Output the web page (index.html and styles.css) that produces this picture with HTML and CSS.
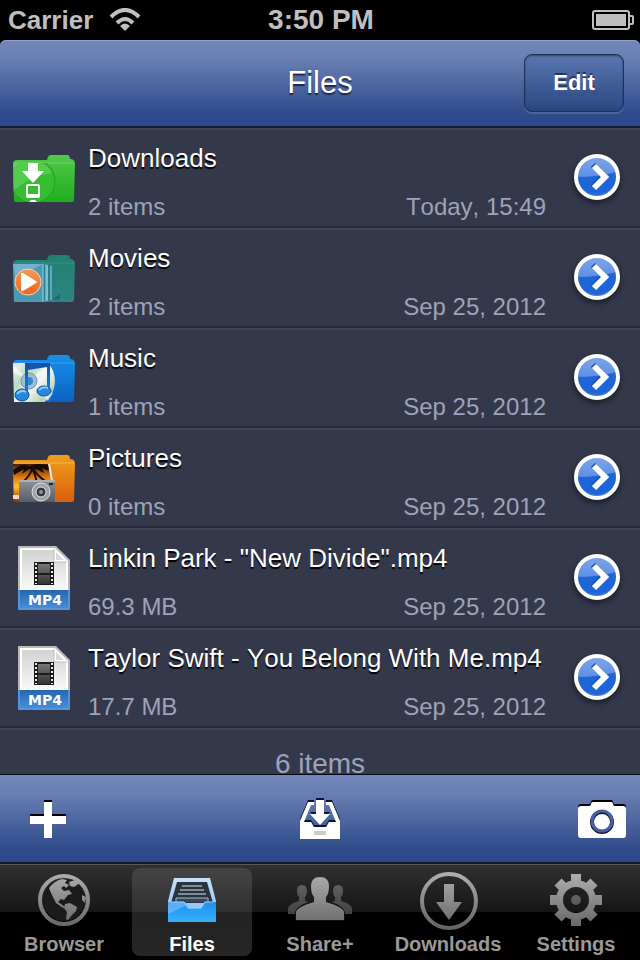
FILE: index.html
```
<!DOCTYPE html>
<html lang="en">

<head>
    <meta charset="UTF-8">
    <meta name="viewport" content="width=device-width, initial-scale=1.0">
    <title>Files</title>
    <link rel="stylesheet" href="styles.css">
</head>

<body>
    <!-- Shared shapes and gradients -->
    <svg class="defs" width="0" height="0" aria-hidden="true">
        <defs>
            <linearGradient id="green" x2="0" y2="1"><stop offset="0" stop-color="#52c94c"/><stop offset="1" stop-color="#1fae1c"/></linearGradient>
            <linearGradient id="teal" x2="0" y2="1"><stop offset="0" stop-color="#23806f"/><stop offset="1" stop-color="#2b8583"/></linearGradient>
            <linearGradient id="blue" x2="0" y2="1"><stop offset="0" stop-color="#1790ea"/><stop offset="1" stop-color="#0b62c4"/></linearGradient>
            <linearGradient id="orange" x2="0" y2="1"><stop offset="0" stop-color="#ef9f1c"/><stop offset="1" stop-color="#d95f0c"/></linearGradient>
            <linearGradient id="sunset" x2="0" y2="1"><stop offset="0" stop-color="#4a1a04"/><stop offset=".35" stop-color="#e0790c"/><stop offset=".6" stop-color="#ffc629"/><stop offset="1" stop-color="#8c2c04"/></linearGradient>
            <linearGradient id="disc" x2="1" y2="1"><stop offset="0" stop-color="#c3a7d8"/><stop offset=".25" stop-color="#e6e9ea"/><stop offset=".42" stop-color="#b9dcc0"/><stop offset=".6" stop-color="#f4f6f8"/><stop offset=".8" stop-color="#b8d8b0"/><stop offset="1" stop-color="#d6c6e8"/></linearGradient>
            <linearGradient id="note" x2="0" y2="1"><stop offset="0" stop-color="#0d4ea8"/><stop offset="1" stop-color="#1f83dc"/></linearGradient>
            <linearGradient id="play" x2="0" y2="1"><stop offset="0" stop-color="#f09a55"/><stop offset="1" stop-color="#f0651a"/></linearGradient>
            <linearGradient id="steel" x2="0" y2="1"><stop offset="0" stop-color="#8b9299"/><stop offset="1" stop-color="#565d66"/></linearGradient>
            <linearGradient id="paper" x2="0" y2="1"><stop offset="0" stop-color="#d2d2d2"/><stop offset="1" stop-color="#fafafa"/></linearGradient>
            <linearGradient id="band" x2="0" y2="1"><stop offset="0" stop-color="#2567ae"/><stop offset="1" stop-color="#4b92dc"/></linearGradient>
            <linearGradient id="film" x2="0" y2="1"><stop offset="0" stop-color="#777"/><stop offset="1" stop-color="#333"/></linearGradient>
            <linearGradient id="ball" x2="0" y2="1"><stop offset="0" stop-color="#7fa6ea"/><stop offset="1" stop-color="#3f78dc"/></linearGradient>
            <linearGradient id="tray" x2="0" y2="1"><stop offset="0" stop-color="#1c8df0"/><stop offset="1" stop-color="#37b4fb"/></linearGradient>
            <linearGradient id="trayEdge" x2="0" y2="1"><stop offset="0" stop-color="#c9e2fa"/><stop offset="1" stop-color="#7fb4ee"/></linearGradient>
            <linearGradient id="grey" gradientUnits="userSpaceOnUse" x1="0" y1="4" x2="0" y2="60"><stop offset="0" stop-color="#b0b0b0"/><stop offset="1" stop-color="#656565"/></linearGradient>
            <linearGradient id="greyDim" gradientUnits="userSpaceOnUse" x1="0" y1="14" x2="0" y2="46"><stop offset="0" stop-color="#626262"/><stop offset="1" stop-color="#424242"/></linearGradient>
            <clipPath id="folderClip"><path d="M1 9h62l-1 39H2z"/></clipPath>

            <path id="folder" d="M1 10q0-4 4-4h30q1-5 4-5h16q3 0 3 4 5 0 5 5l-1 36q0 2-2 2H4q-2 0-2-2z"/>

            <symbol id="arrow" viewBox="0 0 60 60">
                <circle cx="30" cy="29" r="21" fill="url(#ball)"/>
                <path d="M10 29q20 0 40-5a20 20 0 1 1-40 5z" fill="#1e66d8"/>
                <circle cx="30" cy="29" r="21" fill="none" stroke="#fff" stroke-width="4"/>
                <path d="M26 17l11 11-11 11" fill="none" stroke="#164ca8" stroke-width="6"/>
                <path d="M27 18l11 11-11 11" fill="none" stroke="#fff" stroke-width="6"/>
            </symbol>

            <symbol id="mp4" viewBox="0 0 52 64">
                <path d="M0 0h38l14 14v50H0z" fill="#b9b9b9"/>
                <path d="M2 2h35l13 13v33H2z" fill="#fff"/>
                <path d="M4 4h32v12h12v29H4z" fill="url(#paper)"/>
                <path d="M36 2v14h14z" fill="#fff"/>
                <path d="M38 6v8h8z" fill="#d9d9d9"/>
                <path d="M36 3v13h13" fill="none" stroke="#bdbdbd"/>
                <path d="M16 16h20v23H16z" fill="#1b1b1b"/>
                <path d="M20 18h12v9H20zM20 29h12v9H20z" fill="url(#film)"/>
                <path d="M18 17v21M34 17v21" stroke="#e8e8e8" stroke-width="2" stroke-dasharray="2 2"/>
                <path d="M0 44h52v20H0z" fill="url(#band)"/>
                <path d="M1 44v19h50V44" fill="none" stroke="#5295dc" stroke-width="2"/>
                <text x="27" y="59" class="file-type">MP4</text>
            </symbol>
        </defs>
    </svg>

    <div class="status-bar">
        <div class="carrier">
            Carrier
            <svg width="32" height="24" viewBox="0 0 32 24" aria-label="Wi-Fi">
                <g fill="none" stroke="#bfbfbf" stroke-width="4">
                    <path d="M2 9q14-14 28 0"/>
                    <path d="M8 15q8-8 16 0"/>
                </g>
                <path d="M11 18q5-5 10 0l-5 5z" fill="#bfbfbf"/>
            </svg>
        </div>
        <div class="clock">3:50 PM</div>
        <svg class="battery" width="42" height="20" viewBox="0 0 42 20" aria-label="Battery full">
            <rect x="1" y="1" width="36" height="18" rx="2" fill="none" stroke="#bfbfbf" stroke-width="2"/>
            <rect x="4" y="4" width="30" height="12" fill="#bfbfbf"/>
            <path d="M38 6h2q1 0 1 1v6q0 1-1 1h-2" fill="none" stroke="#bfbfbf" stroke-width="2"/>
        </svg>
    </div>

    <header class="nav-bar">
        <h1>Files</h1>
        <button class="edit-button" type="button">Edit</button>
    </header>

    <main class="file-list">
        <ul>
            <li class="row">
                <svg class="icon" width="64" height="48" viewBox="0 0 64 48">
                    <use href="#folder" fill="url(#green)"/>
                    <path d="M2 9h60" stroke="#8fdc85" stroke-opacity=".6"/>
                    <g clip-path="url(#folderClip)">
                        <circle cx="21" cy="27" r="22" fill="#36bd32" stroke="#239d23"/>
                        <path d="M1 9h28q8 3 11 10Q20 21 1 37z" fill="#6ad364" fill-opacity=".6"/>
                        <path d="M16 9h10v8h6L21 29 10 17h6z" fill="#fff"/>
                        <rect x="15" y="31" width="12" height="12" rx="1" fill="none" stroke="#fff" stroke-width="2"/>
                        <path d="M15 40h12v3H15zM19 46h4l2 2h-8z" fill="#fff"/>
                    </g>
                </svg>
                <div class="info">
                    <span class="name">Downloads</span>
                    <div class="meta"><span>2 items</span><span>Today, 15:49</span></div>
                </div>
                <button class="open" type="button" aria-label="Open Downloads"><svg width="60" height="60"><use href="#arrow"/></svg></button>
            </li>
            <li class="row">
                <svg class="icon" width="64" height="48" viewBox="0 0 64 48">
                    <use href="#folder" fill="url(#teal)"/>
                    <path d="M2 9h60" stroke="#4aa391" stroke-opacity=".5"/>
                    <path d="M37 10l3 1v34l-3 3z" fill="#2f78ac"/>
                    <path d="M33 10l3 1v35l-3 2z" fill="#5fa9cf"/>
                    <path d="M1 10h30v38H2z" fill="#4a9ab4"/>
                    <path d="M1 10h30L3 24z" fill="#7cb6d6" fill-opacity=".8"/>
                    <path d="M31 10v38M35 11v36M39 12v34" stroke="#9fd0ec"/>
                    <path d="M40 46l8-6v5z" fill="#1d6a68"/>
                    <circle cx="16" cy="28" r="13" fill="url(#play)" stroke="#fbd0ac"/>
                    <path d="M9 20q0-2 2-1l13 8q2 1 0 2l-13 8q-2 1-2-1z" fill="#fff"/>
                </svg>
                <div class="info">
                    <span class="name">Movies</span>
                    <div class="meta"><span>2 items</span><span>Sep 25, 2012</span></div>
                </div>
                <button class="open" type="button" aria-label="Open Movies"><svg width="60" height="60"><use href="#arrow"/></svg></button>
            </li>
            <li class="row">
                <svg class="icon" width="64" height="48" viewBox="0 0 64 48">
                    <use href="#folder" fill="url(#blue)"/>
                    <path d="M2 9h60" stroke="#54aef2" stroke-opacity=".7"/>
                    <g clip-path="url(#folderClip)">
                        <circle cx="17" cy="27" r="26" fill="url(#disc)"/>
                        <path d="M17 27L1 10v8zM17 27l24 12-5 8zM17 27L36 9l5 8z" fill="#fff" fill-opacity=".6"/>
                        <circle cx="17" cy="27" r="8" fill="#9fc0d4" stroke="#6f98b4"/>
                        <circle cx="17" cy="27" r="4" fill="#2d8ad0"/>
                        <path d="M13 7h25v27h-3V13l-19 3v25h-3z" fill="url(#note)"/>
                        <ellipse cx="10" cy="41" rx="7" ry="6" fill="#2a86dc" stroke="#0c4a9c"/>
                        <ellipse cx="32" cy="37" rx="7" ry="5" fill="#2a86dc" stroke="#0c4a9c"/>
                        <path d="M5 40q4-5 9-2M27 36q4-4 9-2" fill="none" stroke="#8ccaf8" stroke-width="2"/>
                    </g>
                </svg>
                <div class="info">
                    <span class="name">Music</span>
                    <div class="meta"><span>1 items</span><span>Sep 25, 2012</span></div>
                </div>
                <button class="open" type="button" aria-label="Open Music"><svg width="60" height="60"><use href="#arrow"/></svg></button>
            </li>
            <li class="row">
                <svg class="icon" width="64" height="48" viewBox="0 0 64 48">
                    <use href="#folder" fill="url(#orange)"/>
                    <path d="M2 9h60" stroke="#ffc35c" stroke-opacity=".7"/>
                    <path d="M1 10h36l5 38H2z" fill="url(#sunset)"/>
                    <path d="M37 10l4 22" stroke="#f7e9d8" stroke-width="2"/>
                    <path d="M1 41h6v4H1z" fill="#f3d9c4"/>
                    <path d="M1 16l8-5 9 1 6-2 12 1 1 6-7-3 2 5-8-4-3 1-4-1-7 5 2-5-10 6z" fill="#160c06"/>
                    <path d="M21 13q-3 9-10 15M21 13q2 8 14 15M20 13q3 8 5 15" fill="none" stroke="#1c0d05" stroke-width="2"/>
                    <rect x="7" y="26" width="36" height="22" rx="1" fill="url(#steel)"/>
                    <path d="M7 27h36" stroke="#aab1b8" stroke-width="2"/>
                    <path d="M37 29h4v2h-4z" fill="#3b1c18"/>
                    <circle cx="29" cy="38" r="9" fill="#9ea2a6" stroke="#dfe2e4"/>
                    <circle cx="29" cy="38" r="5" fill="#34383d" stroke="#e6e6e6"/>
                    <circle cx="29" cy="38" r="2" fill="#8d96a0"/>
                </svg>
                <div class="info">
                    <span class="name">Pictures</span>
                    <div class="meta"><span>0 items</span><span>Sep 25, 2012</span></div>
                </div>
                <button class="open" type="button" aria-label="Open Pictures"><svg width="60" height="60"><use href="#arrow"/></svg></button>
            </li>
            <li class="row">
                <svg class="icon" width="52" height="64"><use href="#mp4"/></svg>
                <div class="info">
                    <span class="name">Linkin Park - "New Divide".mp4</span>
                    <div class="meta"><span>69.3 MB</span><span>Sep 25, 2012</span></div>
                </div>
                <button class="open" type="button" aria-label="Open New Divide"><svg width="60" height="60"><use href="#arrow"/></svg></button>
            </li>
            <li class="row">
                <svg class="icon" width="52" height="64"><use href="#mp4"/></svg>
                <div class="info">
                    <span class="name">Taylor Swift - You Belong With Me.mp4</span>
                    <div class="meta"><span>17.7 MB</span><span>Sep 25, 2012</span></div>
                </div>
                <button class="open" type="button" aria-label="Open You Belong With Me"><svg width="60" height="60"><use href="#arrow"/></svg></button>
            </li>
        </ul>
        <p class="count">6 items</p>
    </main>

    <div class="toolbar">
        <button class="add" type="button" aria-label="Add">
            <svg width="36" height="38" viewBox="0 0 36 38">
                <path d="M14 0h8v14h14v8H22v14h-8V22H0v-8h14z" fill="#000"/>
                <path d="M14 2h8v14h14v8H22v14h-8V24H0v-8h14z" fill="#fff"/>
            </svg>
        </button>
        <button type="button" aria-label="Move to inbox">
            <svg width="40" height="42" viewBox="0 0 40 42">
                <g fill="#0c1530">
                    <path d="M8 2h6v3h-3L4 22h7l3 5h12l3-5h7L29 5h-3V2h6l8 19v17H0V21z"/>
                    <path d="M16 0h8v14h6L20 25 10 14h6z"/>
                </g>
                <g fill="#fff">
                    <path d="M8 4h6v3h-3L4 24h7l3 5h12l3-5h7L29 7h-3V4h6l8 19v18H0V23z"/>
                    <path d="M16 2h8v14h6L20 27 10 16h6z"/>
                </g>
                <rect x="14" y="33" width="12" height="4" rx="1" fill="#ccc"/>
            </svg>
        </button>
        <button class="camera" type="button" aria-label="Camera">
            <svg width="48" height="38" viewBox="0 0 48 38">
                <path d="M3 4h8q2 0 2-2t2-2h18q2 0 2 2t2 2h8q3 0 3 3v26q0 3-3 3H3q-3 0-3-3V7q0-3 3-3z" fill="#000"/>
                <path d="M3 6h8q2 0 2-2t2-2h18q2 0 2 2t2 2h8q3 0 3 3v26q0 3-3 3H3q-3 0-3-3V9q0-3 3-3z" fill="#fff"/>
                <circle cx="24" cy="22" r="10" fill="none" stroke="#10182f" stroke-width="4"/>
                <circle cx="24" cy="21" r="10" fill="none" stroke="#4a629f" stroke-width="3"/>
            </svg>
        </button>
    </div>

    <nav class="tab-bar">
        <a href="#browser">
            <svg width="64" height="64" viewBox="0 0 64 64">
                <circle cx="32" cy="32" r="21" fill="#1c1c1c"/>
                <circle cx="32" cy="32" r="24" fill="none" stroke="url(#grey)" stroke-width="4"/>
                <path d="M17 20q5-7 13-9l5 1-2 3 4 2-3 3-2-2-3 2 3 3 5-1 3 4-4 1-4 5-3-1-3 3 3 2 4 3-2 1-7-5-3-6-2-4z" fill="url(#grey)"/>
                <path d="M37 14l6-2 5 3-6 4-4-1zM33 36l5-1 7 4-1 4-4 4-4 5-2-1 1-7-3-4zM50 27l4 2-1 6-3-3z" fill="url(#grey)"/>
            </svg>
            Browser
        </a>
        <a class="active" href="#files">
            <svg width="64" height="64" viewBox="0 0 64 64">
                <path d="M14 10h36l6 23v21H8V33z" fill="url(#trayEdge)"/>
                <path d="M17 14h30l6 21H11z" fill="#29333f"/>
                <path d="M22 18h20M20 22h24M18 26h28" stroke="#d5e5f3" stroke-width="1"/>
                <path d="M16 34v-4h32v4" fill="#3c4855" stroke="#9dbdd8"/>
                <path d="M8 34h17l4 6h12l4-6h11v20H8z" fill="url(#tray)"/>
                <path d="M8 34h17l2 3-19 9z" fill="#7cc3fa" fill-opacity=".6"/>
                <path d="M11 34h13l4 6h13l4-6h8" fill="none" stroke="#a8d6fc"/>
            </svg>
            Files
        </a>
        <a href="#share">
            <svg width="64" height="64" viewBox="0 0 64 64">
                <path id="person" d="M0 46v-6q1-4 11-7v-4q-2-2-2-6 0-6 5-6t5 6q0 4-2 6v4q10 3 11 7v6z" fill="url(#greyDim)"/>
                <use href="#person" x="36"/>
                <path d="M7 53v-8q1-8 18-12l1-1h12l1 1q17 4 18 12v8z" fill="#111"/>
                <path d="M8 52v-8q1-5 18-10v-5q-3-3-3-11 0-9 9-9t9 9q0 8-3 11v5q17 5 18 10v8z" fill="url(#grey)"/>
            </svg>
            Share+
        </a>
        <a href="#downloads">
            <svg width="64" height="64" viewBox="0 0 64 64">
                <circle cx="33" cy="33" r="27" fill="none" stroke="url(#grey)" stroke-width="4"/>
                <path d="M28 16h10v18h8L33 52 20 34h8z" fill="url(#grey)"/>
            </svg>
            Downloads
        </a>
        <a href="#settings">
            <svg width="64" height="64" viewBox="0 0 64 64">
                <mask id="gear">
                    <circle cx="32" cy="32" r="20" fill="#fff"/>
                    <g stroke="#fff" stroke-width="10">
                        <path d="M32 6v52M6 32h52"/>
                        <path d="M14 14l36 36M50 14L14 50"/>
                    </g>
                    <circle cx="32" cy="32" r="13" fill="#000"/>
                    <circle cx="32" cy="32" r="5" fill="#999"/>
                </mask>
                <rect width="64" height="64" fill="url(#grey)" mask="url(#gear)"/>
            </svg>
            Settings
        </a>
    </nav>
</body>

</html>
```
FILE: styles.css
```
* {
    box-sizing: border-box;
}

body {
    margin: 0;
    height: 100vh;
    display: flex;
    flex-direction: column;
    background-color: #000;
    color: #fff;
    font-family: "Liberation Sans", Arial, sans-serif;
    font-kerning: none;
    overflow: hidden;
}

.defs {
    position: absolute;
}

svg {
    display: block;
}

button {
    font-family: inherit;
    color: inherit;
    background: none;
    border: none;
    padding: 0;
    cursor: pointer;
}

/* Status bar */
.status-bar {
    display: grid;
    grid-template-columns: 1fr auto 1fr;
    align-items: center;
    flex: none;
    height: 40px;
    padding: 0 6px 0 8px;
    color: #bfbfbf;
    font-size: 26px;
    font-weight: bold;
}

.carrier {
    display: flex;
    align-items: center;
    gap: 16px;
}

.clock {
    font-size: 28px;
}

.battery {
    justify-self: end;
}

/* Top bar */
.nav-bar {
    display: grid;
    grid-template-columns: 1fr auto 1fr;
    align-items: center;
    flex: none;
    height: 88px;
    padding: 0 16px;
    border-bottom: 2px solid #161b33;
    border-radius: 6px 6px 0 0;
    background: linear-gradient(#7288ba, #6a80b4 20%, #304b8a 85%, #2c4790);
    box-shadow: inset 0 1px 0 #93a2c8;
}

.nav-bar h1 {
    grid-column: 2;
    margin: 0;
    font-size: 31px;
    font-weight: normal;
    text-shadow: 0 2px 1px #1d2748;
}

.edit-button {
    justify-self: end;
    width: 100px;
    height: 58px;
    border: 1px solid #1f3059;
    border-radius: 8px;
    background: linear-gradient(#5a77b1, #2b4680);
    box-shadow: 0 2px 0 rgba(255, 255, 255, 0.15), inset 0 1px 2px rgba(0, 0, 0, 0.4);
    font-size: 22px;
    font-weight: bold;
    text-shadow: 0 -2px 0 #2a365c;
}

/* File list */
.file-list {
    flex: 1;
    min-height: 0;
    overflow: hidden;
    background-color: #33394b;
}

.file-list ul {
    margin: 0;
    padding: 0;
    list-style: none;
}

.row {
    display: grid;
    grid-template-columns: 88px 1fr 94px;
    align-items: center;
    border-top: 2px solid #40465a;
    border-bottom: 2px solid #25293c;
}

.icon {
    justify-self: center;
}

.info {
    min-width: 0;
    padding: 13px 0 5px;
}

.name {
    display: block;
    margin-bottom: 20px;
    font-size: 26px;
    line-height: 30px;
    white-space: nowrap;
    text-shadow: 0 2px 1px #000;
}

.meta {
    display: flex;
    justify-content: space-between;
    color: #9da3b8;
    font-size: 24px;
    line-height: 28px;
}

.open {
    justify-self: center;
    margin-left: 8px;
}

.open svg {
    filter: drop-shadow(0 3px 3px rgba(0, 0, 0, 0.5));
}

.file-type {
    fill: #fff;
    font-family: "DejaVu Sans", sans-serif;
    font-size: 14px;
    font-weight: bold;
    text-anchor: middle;
}

.count {
    margin: 0;
    padding-top: 18px;
    border-top: 2px solid #40465a;
    color: #9da3b8;
    font-size: 28px;
    line-height: 32px;
    text-align: center;
}

/* Bottom toolbar */
.toolbar {
    display: grid;
    grid-template-columns: 1fr auto 1fr;
    align-items: center;
    flex: none;
    height: 88px;
    padding: 0 14px;
    border-top: 1px solid #060914;
    background: linear-gradient(#7288ba, #6a80b4 20%, #304b8a 85%, #2c4790);
}

.add {
    justify-self: start;
    padding-left: 16px;
}

.camera {
    justify-self: end;
}

/* Tab bar */
.tab-bar {
    display: flex;
    flex: none;
    gap: 8px;
    padding: 4px;
    border-top: 2px solid #151a20;
    background: linear-gradient(#303030, #161616 48px, #000 48px);
    box-shadow: inset 0 1px 0 #585858;
}

.tab-bar a {
    display: flex;
    flex: 1 1 0;
    flex-direction: column;
    align-items: center;
    border-radius: 8px;
    color: #999;
    font-size: 20px;
    font-weight: bold;
    line-height: 24px;
    text-decoration: none;
}

.tab-bar .active {
    color: #fff;
    background: linear-gradient(#444, #303030 44px, #232323 44px, #262626);
}
```
